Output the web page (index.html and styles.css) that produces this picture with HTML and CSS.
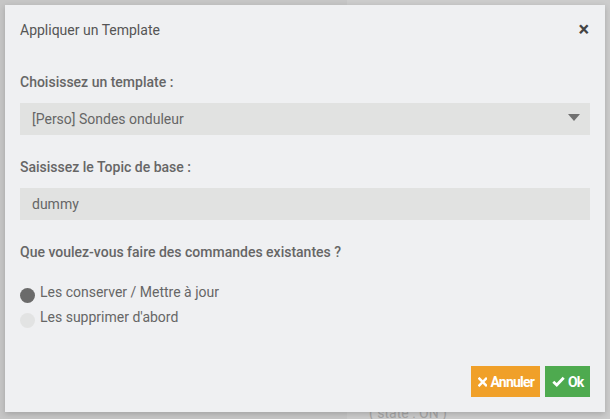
FILE: index.html
```html
<!DOCTYPE html>
<html lang="fr">
<head>
<meta charset="utf-8">
<title>Appliquer un Template</title>
<link rel="stylesheet" href="styles.css">
</head>
<body>
<div class="backdrop">
  <div class="bg-panel bg-left"></div>
  <div class="bg-panel bg-right"><span class="bg-text">( state : ON )</span></div>
</div>
<div class="modal">
  <div class="modal-header">
    <span class="modal-title">Appliquer un Template</span>
    <span class="close">×</span>
  </div>
  <div class="modal-body">
    <label class="field-label">Choisissez un template :</label>
    <div class="select">
      <span>[Perso] Sondes onduleur</span>
      <span class="caret"></span>
    </div>
    <label class="field-label">Saisissez le Topic de base :</label>
    <div class="input">dummy</div>
    <label class="field-label q">Que voulez-vous faire des commandes existantes ?</label>
    <div class="radios">
      <div class="radio"><span class="dot checked"></span><span>Les conserver / Mettre à jour</span></div>
      <div class="radio"><span class="dot"></span><span>Les supprimer d'abord</span></div>
    </div>
  </div>
  <div class="modal-footer">
    <button class="btn btn-cancel"><svg width="10" height="10" viewBox="0 0 10 10"><path d="M1.5 1.5L8.5 8.5M8.5 1.5L1.5 8.5" stroke="#fff" stroke-width="2.6" stroke-linecap="square"/></svg>Annuler</button>
    <button class="btn btn-ok"><svg width="13" height="11" viewBox="0 0 12 10"><path d="M1.2 5.2L4.4 8.2L10.8 1.6" stroke="#fff" stroke-width="2.6" fill="none"/></svg>Ok</button>
  </div>
</div>
</body>
</html>
```
FILE: styles.css
```css
html, body {
  margin: 0;
  padding: 0;
}
body {
  width: 610px;
  height: 419px;
  overflow: hidden;
  position: relative;
  background: #c6c6c6;
  font-family: Roboto, "Liberation Sans", sans-serif;
}
.backdrop {
  display: flex;
  height: 100%;
}
.bg-panel {
  background: #c6c6c6;
}
.bg-left {
  width: 347px;
}
.bg-right {
  flex: 1;
  background: #cccccc;
  display: flex;
  align-items: flex-end;
  padding-left: 22px;
}
.bg-text {
  color: #a5a5a5;
  font-size: 14px;
  line-height: 14px;
  margin-bottom: -1px;
}
.modal {
  position: absolute;
  left: 5px;
  top: 5px;
  width: 600px;
  height: 407px;
  background: #eff0f2;
  box-shadow: 0 2px 6px rgba(0,0,0,0.18);
  display: flex;
  flex-direction: column;
  box-sizing: border-box;
  padding: 0 15px;
}
.modal-header {
  display: flex;
  justify-content: space-between;
  align-items: center;
  height: 50px;
}
.modal-title {
  font-size: 14px;
  color: #555;
}
.close {
  font-size: 20px;
  font-weight: 700;
  color: #444;
  margin-right: 1px;
  margin-top: -2px;
}
.modal-body {
  display: flex;
  flex-direction: column;
  padding-top: 19px;
}
.field-label {
  font-size: 14px;
  font-weight: 500;
  color: #666;
  height: 16px;
  line-height: 16px;
  margin-bottom: 13px;
}
.select, .input {
  height: 32px;
  background: #e1e2e1;
  display: flex;
  align-items: center;
  padding: 0 12px;
  font-size: 14px;
  color: #666;
  margin-bottom: 24px;
}
.select {
  justify-content: space-between;
}
.caret {
  width: 0;
  height: 0;
  border-left: 6px solid transparent;
  border-right: 6px solid transparent;
  border-top: 7px solid #707070;
  margin-right: -2px;
  margin-top: -3px;
}
.field-label.q {
  margin-bottom: 24px;
}
.radios {
  display: flex;
  flex-direction: column;
  gap: 9px;
}
.radio {
  display: flex;
  align-items: flex-start;
  gap: 5px;
  font-size: 14px;
  color: #666;
  height: 16px;
  line-height: 16px;
}
.dot {
  width: 15px;
  height: 15px;
  border-radius: 50%;
  background: #e2e3e3;
  margin-top: 4px;
}
.dot.checked {
  background: #6b6b6b;
}
.modal-footer {
  margin-top: auto;
  display: flex;
  justify-content: flex-end;
  gap: 5px;
  padding-bottom: 15px;
}
.btn {
  height: 31px;
  border: none;
  color: #fff;
  font-family: Roboto, "Liberation Sans", sans-serif;
  font-size: 14px;
  font-weight: 700;
  display: flex;
  align-items: center;
  gap: 3px;
  padding: 0 6px;
  letter-spacing: -0.8px;
}
.btn-cancel {
  background: #f0a029;
  width: 69px;
  padding-left: 7px;
}
.btn-ok {
  background: #4eaa4f;
  width: 45px;
  padding-left: 7px;
}
```
